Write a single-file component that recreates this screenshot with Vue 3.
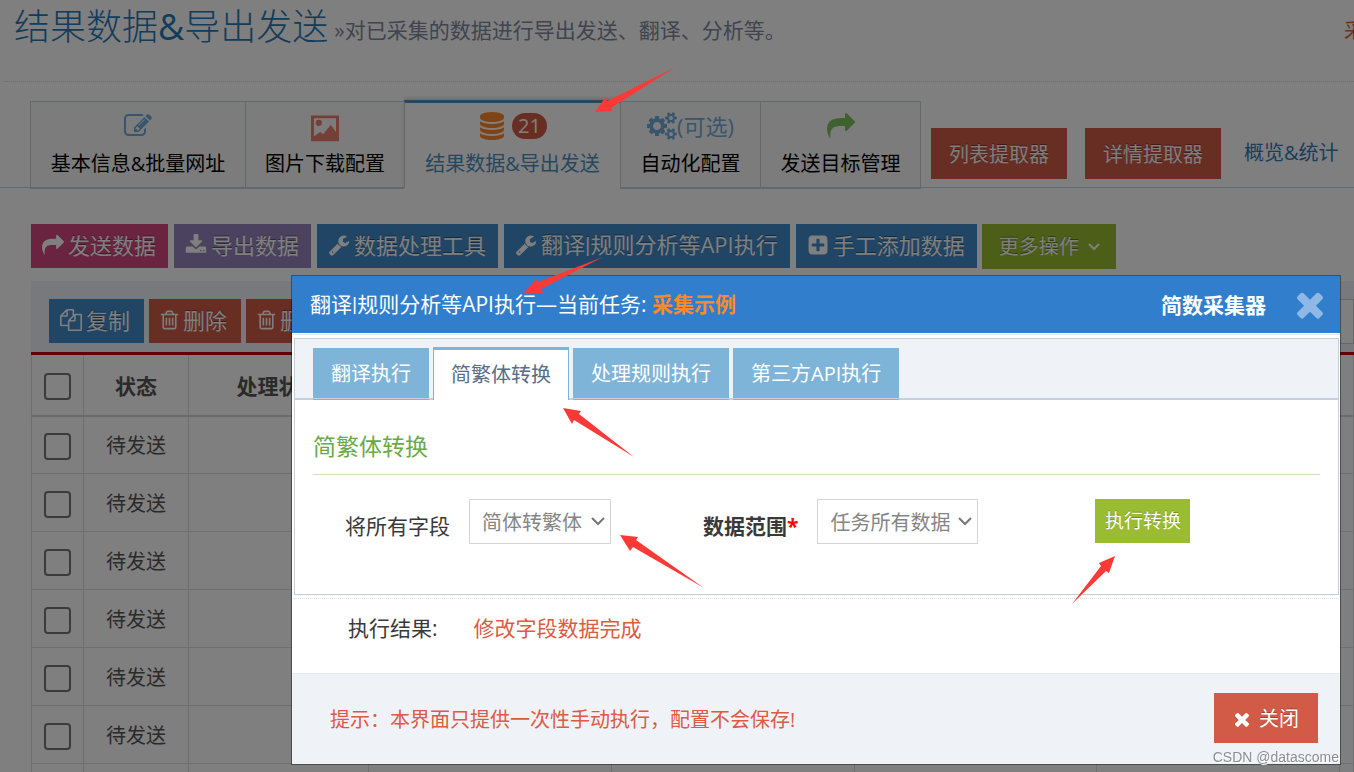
<script setup>
import { ref } from 'vue'

const icons = {
  share: 'M1792 640q0 26-19 45l-512 512q-19 19-45 19t-45-19-19-45v-256h-224q-98 0-175.5 6t-154 21.5-133 42.5-105.5 69.5-80 101-48.5 138.5-17.5 181q0 55 5 123 0 6 2.5 23.5t2.5 26.5q0 15-8.5 25t-23.5 10q-16 0-28-17-7-9-13-22t-13.5-30-10.5-24q-127-285-127-451 0-199 53-333 162-403 875-403h224v-256q0-26 19-45t45-19 45 19l512 512q19 19 19 45z',
  download: 'M1344 1344q0-26-19-45t-45-19-45 19-19 45 19 45 45 19 45-19 19-45zm256 0q0-26-19-45t-45-19-45 19-19 45 19 45 45 19 45-19 19-45zm128-224v320q0 40-28 68t-68 28h-1472q-40 0-68-28t-28-68v-320q0-40 28-68t68-28h465l135 136q58 56 136 56t136-56l136-136h464q40 0 68 28t28 68zm-325-569q17 41-14 70l-448 448q-18 19-45 19t-45-19l-448-448q-31-29-14-70 17-39 59-39h256v-448q0-26 19-45t45-19h256q26 0 45 19t19 45v448h256q42 0 59 39z',
  wrench: 'M448 1472q0-26-19-45t-45-19-45 19-19 45 19 45 45 19 45-19 19-45zm644-420l-682 682q-37 37-90 37-52 0-91-37l-106-108q-38-36-38-90 0-53 38-91l681-681q39 98 114.5 173.5t173.5 114.5zm634-435q0 39-23 106-47 134-164.5 217.5t-258.5 83.5q-185 0-316.5-131.5t-131.5-316.5 131.5-316.5 316.5-131.5q58 0 121.5 16.5t107.5 46.5q16 11 16 28t-16 28l-293 169v224l193 107q5-3 79-48.5t135.5-81 70.5-35.5q15 0 23.5 10t8.5 25z',
  plus: 'M1408 960v-128q0-26-19-45t-45-19h-320v-320q0-26-19-45t-45-19h-128q-26 0-45 19t-19 45v320h-320q-26 0-45 19t-19 45v128q0 26 19 45t45 19h320v320q0 26 19 45t45 19h128q26 0 45-19t19-45v-320h320q26 0 45-19t19-45zm256-544v960q0 119-84.5 203.5t-203.5 84.5h-960q-119 0-203.5-84.5t-84.5-203.5v-960q0-119 84.5-203.5t203.5-84.5h960q119 0 203.5 84.5t84.5 203.5z',
  times: 'M1490 1322q0 40-28 68l-136 136q-28 28-68 28t-68-28l-294-294-294 294q-28 28-68 28t-68-28l-136-136q-28-28-28-68t28-68l294-294-294-294q-28-28-28-68t28-68l136-136q28-28 68-28t68 28l294 294 294-294q28-28 68-28t68 28l136 136q28 28 28 68t-28 68l-294 294 294 294q28 28 28 68z',
  database: 'M896 768q237 0 443-43t325-127v170q0 69-103 128t-280 93.5-385 34.5-385-34.5-280-93.5-103-128v-170q119 84 325 127t443 43zm0 768q237 0 443-43t325-127v170q0 69-103 128t-280 93.5-385 34.5-385-34.5-280-93.5-103-128v-170q119 84 325 127t443 43zm0-384q237 0 443-43t325-127v170q0 69-103 128t-280 93.5-385 34.5-385-34.5-280-93.5-103-128v-170q119 84 325 127t443 43zm0-1152q208 0 385 34.5t280 93.5 103 128v128q0 69-103 128t-280 93.5-385 34.5-385-34.5-280-93.5-103-128v-128q0-69 103-128t280-93.5 385-34.5z',
  edit: 'M888 1184l116-116-152-152-116 116v56h96v96h56zm440-720q-16-16-33 1l-350 350q-17 17-1 33t33-1l350-350q17-17 1-33zm80 594v190q0 119-84.5 203.5t-203.5 84.5h-832q-119 0-203.5-84.5t-84.5-203.5v-832q0-119 84.5-203.5t203.5-84.5h832q63 0 117 25 15 7 18 23 3 17-9 29l-49 49q-14 14-32 8-23-6-45-6h-832q-66 0-113 47t-47 113v832q0 66 47 113t113 47h832q66 0 113-47t47-113v-126q0-13 9-22l64-64q15-15 35-7t20 29zm-96-738l288 288-672 672h-288v-288zm444 132l-92 92-288-288 92-92q28-28 68-28t68 28l152 152q28 28 28 68t-28 68z',
  cogs: 'M896 896q0-106-75-181t-181-75-181 75-75 181 75 181 181 75 181-75 75-181zm768 512q0-52-38-90t-90-38-90 38-38 90q0 53 37.5 90.5t90.5 37.5 90.5-37.5 37.5-90.5zm0-1024q0-52-38-90t-90-38-90 38-38 90q0 53 37.5 90.5t90.5 37.5 90.5-37.5 37.5-90.5zm-384 421v185q0 10-7 19.5t-16 10.5l-155 24q-11 35-32 76 34 48 90 115 7 11 7 20 0 12-7 19-23 30-82.5 89.5t-78.5 59.5q-11 0-21-7l-115-90q-37 19-77 31-11 108-23 155-7 24-30 24h-186q-11 0-20-7.5t-10-17.5l-23-153q-34-10-75-31l-118 89q-7 7-20 7-11 0-21-8-144-133-144-160 0-9 7-19 10-14 41-53t47-61q-23-44-35-82l-152-24q-10-1-17-9.5t-7-19.5v-185q0-10 7-19.5t16-10.5l155-24q11-35 32-76-34-48-90-115-7-11-7-20 0-12 7-20 22-30 82-89t79-59q11 0 21 7l115 90q34-18 77-32 11-108 23-154 7-24 30-24h186q11 0 20 7.5t10 17.5l23 153q34 10 75 31l118-89q8-7 20-7 11 0 21 8 144 133 144 160 0 8-7 19-12 16-42 54t-45 60q23 48 34 82l152 23q10 2 17 10.5t7 19.5zm640 533v140q0 16-149 31-12 27-30 52 51 113 51 138 0 4-4 7-122 71-124 71-8 0-46-47t-52-68q-20 2-30 2t-30-2q-14 21-52 68t-46 47q-2 0-124-71-4-3-4-7 0-25 51-138-18-25-30-52-149-15-149-31v-140q0-16 149-31 13-29 30-52-51-113-51-138 0-4 4-7 4-2 35-20t59-34 30-16q8 0 46 46.5t52 67.5q20-2 30-2t30 2q51-71 92-112l6-2q4 0 124 70 4 3 4 7 0 25-51 138 17 23 30 52 149 15 149 31zm0-1024v140q0 16-149 31-12 27-30 52 51 113 51 138 0 4-4 7-122 71-124 71-8 0-46-47t-52-68q-20 2-30 2t-30-2q-14 21-52 68t-46 47q-2 0-124-71-4-3-4-7 0-25 51-138-18-25-30-52-149-15-149-31v-140q0-16 149-31 13-29 30-52-51-113-51-138 0-4 4-7 4-2 35-20t59-34 30-16q8 0 46 46.5t52 67.5q20-2 30-2t30 2q51-71 92-112l6-2q4 0 124 70 4 3 4 7 0 25-51 138 17 23 30 52 149 15 149 31z',
  copy: 'M1696 384q40 0 68 28t28 68v1216q0 40-28 68t-68 28h-960q-40 0-68-28t-28-68v-288h-544q-40 0-68-28t-28-68v-672q0-40 20-88t48-76l408-408q28-28 76-48t88-20h416q40 0 68 28t28 68v328q68-40 128-40h416zm-544 213l-299 299h299v-299zm-640-384l-299 299h299v-299zm196 647l316-316v-416h-384v416q0 40-28 68t-68 28h-416v640h512v-256q0-40 20-88t48-76zm956 804v-1152h-384v416q0 40-28 68t-68 28h-416v640h896z',
  trash: 'M704 736v576q0 14-9 23t-23 9h-64q-14 0-23-9t-9-23v-576q0-14 9-23t23-9h64q14 0 23 9t9 23zm256 0v576q0 14-9 23t-23 9h-64q-14 0-23-9t-9-23v-576q0-14 9-23t23-9h64q14 0 23 9t9 23zm256 0v576q0 14-9 23t-23 9h-64q-14 0-23-9t-9-23v-576q0-14 9-23t23-9h64q14 0 23 9t9 23zm128 724v-948h-896v948q0 22 7 40.5t14.5 27 10.5 8.5h832q3 0 10.5-8.5t14.5-27 7-40.5zm-672-1076h448l-48-117q-7-9-17-11h-317q-10 2-17 11zm928 32v64q0 14-9 23t-23 9h-96v948q0 83-47 143.5t-113 60.5h-832q-66 0-113-58.5t-47-141.5v-952h-96q-14 0-23-9t-9-23v-64q0-14 9-23t23-9h309l70-167q15-37 54-63t79-26h320q40 0 79 26t54 63l70 167h309q14 0 23 9t9 23z',
  picture: 'M0 100h1792v1640h-1792zM190 270v1150l400-270 180 150 500-590 330 440v-880zM700 560a200 200 0 1 1-400 0a200 200 0 1 1 400 0z',
}

const actions = [
  { text: ['发送数据'], icon: 'share', tone: 'pink' },
  { text: ['导出数据'], icon: 'download', tone: 'purple' },
  { text: ['数据处理工具'], icon: 'wrench', tone: 'blue' },
  { text: ['翻译', '规则分析等API执行'], icon: 'wrench', tone: 'blue' },
  { text: ['手工添加数据'], icon: 'plus', tone: 'blue' },
]
const rows = [1, 2, 3, 4, 5, 6, 7]
const modalTabs = ['翻译执行', '简繁体转换', '处理规则执行', '第三方API执行']
const current = ref('简繁体转换')
const direction = ref('简体转繁体')
const range = ref('任务所有数据')
</script>

<template>
  <div class="page">
    <header class="head">
      <h1>结果数据<span class="amp">&amp;</span>导出发送</h1>
      <small>»对已采集的数据进行导出发送、翻译、分析等。</small>
      <a class="more" href="#">采</a>
    </header>

    <nav class="nav">
      <div class="nav-tabs">
        <a href="#"><span class="ico sky"><svg class="i28" viewBox="0 0 1792 1792"><path :d="icons.edit" /></svg></span><span>基本信息&amp;批量网址</span></a>
        <a href="#"><span class="ico coral"><svg class="i28 low" viewBox="0 0 1792 1792"><path fill-rule="evenodd" :d="icons.picture" /></svg></span><span>图片下载配置</span></a>
        <a href="#" class="on"><span class="ico orange"><svg class="i28" viewBox="0 0 1792 1792"><path :d="icons.database" /></svg><b class="badge">21</b></span><span>结果数据&amp;导出发送</span></a>
        <a href="#"><span class="ico sky tight"><svg class="wide" viewBox="0 0 1920 1792"><path :d="icons.cogs" /></svg>(可选)</span><span>自动化配置</span></a>
        <a href="#"><span class="ico green"><svg class="i28" viewBox="0 0 1792 1792"><path :d="icons.share" /></svg></span><span>发送目标管理</span></a>
      </div>
      <div class="extract">
        <button type="button">列表提取器</button>
        <button type="button">详情提取器</button>
        <a href="#">概览&amp;统计</a>
      </div>
    </nav>

    <div class="actions">
      <button v-for="a in actions" :key="a.text[0]" type="button" class="btn" :class="a.tone">
        <svg class="i22" viewBox="0 0 1792 1792"><path :d="icons[a.icon]" /></svg>
        <span>{{ a.text[0] }}<template v-if="a.text[1]"><span class="sep">|</span>{{ a.text[1] }}</template></span>
      </button>
      <button type="button" class="btn lime">更多操作
        <svg class="chev" viewBox="0 0 14 10"><path d="M2 2l5 5 5-5" /></svg>
      </button>
    </div>

    <section class="panel">
      <div class="bar">
        <button type="button" class="btn blue"><svg class="i22" viewBox="0 0 1792 1792"><path :d="icons.copy" /></svg>复制</button>
        <button type="button" class="btn red"><svg class="slim" viewBox="128 0 1536 1792"><path :d="icons.trash" /></svg>删除</button>
        <button type="button" class="btn red"><svg class="slim" viewBox="128 0 1536 1792"><path :d="icons.trash" /></svg>删</button>
        <input type="text" aria-label="搜索">
      </div>
      <table>
        <colgroup><col class="c1"><col class="c2"><col class="c3"><col><col><col><col><col class="c8"></colgroup>
        <thead>
          <tr><th><input type="checkbox" aria-label="全选"></th><th>状态</th><th>处理状态</th><th></th><th></th><th></th><th></th><th></th></tr>
        </thead>
        <tbody>
          <tr v-for="r in rows" :key="r">
            <td><input type="checkbox" :aria-label="'选择第' + r + '行'"></td><td>待发送</td><td></td><td></td><td></td><td></td><td></td><td></td>
          </tr>
        </tbody>
      </table>
    </section>
  </div>

  <div class="overlay">
    <div class="modal" role="dialog" aria-modal="true">
      <div class="m-head">
        <span class="m-title">翻译<span class="sep">|</span>规则分析等API执行—当前任务: <b>采集示例</b></span>
        <strong>简数采集器</strong>
        <button type="button" class="x" aria-label="关闭窗口"><svg viewBox="302 302 1188 1252"><path :d="icons.times" /></svg></button>
      </div>
      <div class="m-body">
        <div class="box">
          <div class="tabs" role="tablist">
            <button v-for="t in modalTabs" :key="t" type="button" role="tab" :aria-selected="t === current" :class="{ on: t === current }" @click="current = t">{{ t }}</button>
          </div>
          <div class="pane">
            <h2>简繁体转换</h2>
            <div class="form">
              <label for="dir">将所有字段</label>
              <span class="pick"><select id="dir" v-model="direction"><option>简体转繁体</option><option>繁体转简体</option></select><svg class="chev" viewBox="0 0 14 10"><path d="M1 1l6 6 6-6" /></svg></span>
              <label for="range" class="bold">数据范围<i>*</i></label>
              <span class="pick range"><select id="range" v-model="range"><option>任务所有数据</option></select><svg class="chev" viewBox="0 0 14 10"><path d="M1 1l6 6 6-6" /></svg></span>
              <button type="button" class="run">执行转换</button>
            </div>
          </div>
        </div>
        <div class="result"><span>执行结果:</span><output>修改字段数据完成</output></div>
      </div>
      <div class="m-foot">
        <p>提示：本界面只提供一次性手动执行，配置不会保存!</p>
        <button type="button"><svg viewBox="302 302 1188 1252"><path :d="icons.times" /></svg>关闭</button>
      </div>
      <span class="mark">CSDN @datascome</span>
    </div>
  </div>

  <svg class="arrows" width="1354" height="772" viewBox="0 0 1354 772" aria-hidden="true">
    <path d="M595 112l10.500-15 1.500 4 67-33-63 40 2 3z" />
    <path d="M524 293l12-14 2 3 65-25-62 32 2 4z" />
    <path d="M563 408l18 3-2 3 55 43-60-37-2 4z" />
    <path d="M620 535l18 2-2 3 68 48-71-41-3 4z" />
    <path d="M1115 556l-16 7 2 3-29 38 34-33 3 2z" />
  </svg>
</template>

<style>
body { margin: 0; background: #fff; overflow: hidden; }
</style>

<style scoped>
.page, .overlay { font-family: "Open Sans", "Noto Sans CJK SC", sans-serif; font-size: 20px; line-height: 30px; color: #393939; }
.page *, .overlay * { box-sizing: border-box; }
button, input, select { font-family: inherit; font-size: inherit; line-height: inherit; border: 0; border-radius: 0; margin: 0; }
a { text-decoration: none; }
svg { display: block; fill: currentColor; flex: none; }
.sep { font-family: Roboto, sans-serif; }
.page { height: 100vh; overflow: hidden; background: #fff; }

.head { display: flex; align-items: center; height: 82px; margin-left: 3px; padding: 0 0 28px 11px; box-sizing: border-box; border-bottom: 1px dotted #ddd; white-space: nowrap; overflow: hidden; }
h1 { margin: 0; font-size: 36px; line-height: 48px; font-weight: 300; color: #2679b5; }
.amp { font-weight: 400; }
.head small { margin-left: 6px; font-size: 21px; padding-top: 7px; color: #8089a0; flex: 1; }
.more { width: 10px; padding-top: 8px; color: #dd5a43; overflow: hidden; }

.nav { display: flex; margin-top: 18px; height: 88px; border-bottom: 1px solid #c5d0dc; padding-left: 30px; white-space: nowrap; }
.nav-tabs { display: grid; grid-template-columns: 215px 159px 216px 140px 161px; height: 89px; padding-top: 1px; }
.nav-tabs a { display: flex; flex-direction: column; align-items: center; padding-top: 10px; color: #000; background: #f9f9f9; border: 1px solid #c5d0dc; border-right: 0; border-bottom-width: 2px; }
.nav-tabs a:last-child { border-right: 1px solid #c5d0dc; }
.nav-tabs a.on { margin-top: -1px; padding-top: 9px; border-top: 3px solid #4c8fbd; border-bottom-color: #fff; background: #fff; color: #4c8fbd; box-shadow: 0 -2px 3px rgba(0, 0, 0, 0.15); }
.ico { display: flex; align-items: center; gap: 6px; height: 28px; margin-bottom: 9px; font-size: 22px; }
.ico.tight { gap: 0; }
.i28 { width: 28px; height: 28px; }
.low { margin-top: 3px; }
.wide { width: 30px; height: 28px; }
.sky { color: #72aadb; }
.coral { color: #e87f6e; }
.orange { color: #ff892a; }
.green { color: #7fc35d; }
.badge { padding: 0 6px; border-radius: 13px; background: #d15b47; color: #fff; font-size: 20px; font-weight: 400; line-height: 26px; }
.extract { display: flex; align-items: center; padding: 19px 0 0 10px; }
.extract button { height: 51px; width: 136px; padding: 3px 0 0; margin-right: 18px; background: #d15b47; color: #fff; text-shadow: 0 -1px 0 rgba(0, 0, 0, 0.4); }
.extract a { color: #337ab7; margin-left: 5px; }

.actions { display: flex; gap: 6px; margin: 36px 0 0 31px; height: 45px; align-items: flex-start; }
.btn { display: flex; align-items: center; gap: 4px; height: 44px; padding: 0 12px 3px 11px; color: #fff; font-size: 22px; white-space: nowrap; text-shadow: 0 -1px 0 rgba(0, 0, 0, 0.4); }
.i22 { width: 22px; height: 22px; }
.slim { width: 19px; height: 22px; }
.pink { background: #d6487e; }
.purple { background: #9585bf; }
.blue { background: #428bca; }
.red { background: #d15b47; }
.lime { height: 45px; margin-left: -1px; padding: 0 15px 0 17px; gap: 8px; font-size: 20px; background: #9abc32; }
.chev { width: 14px; height: 10px; fill: none; stroke: currentColor; stroke-width: 2; }

.panel { margin: 12px 0 0 31px; background: #eff3f8; }
.bar { display: flex; gap: 5px; padding: 18px 0 8px 18px; }
.bar input { flex: 1; min-width: 0; height: 45px; border: 1px solid #ccc; background: #fff; margin-left: 60px; }
.bar .btn { padding-right: 14px; }
table { width: 100%; table-layout: fixed; border-collapse: collapse; border-top: 3px solid #c00000; background: #fff; font-size: 20px; }
.c1 { width: 52px; }
.c2 { width: 105px; }
.c3 { width: 180px; }
.c8 { width: 14px; }
th, td { height: 58px; padding: 2px 0 0; text-align: center; border: 1px solid #dddfe2; border-top: 0; color: #555; }
th { height: 62px; font-size: 21px; border-bottom: 2px solid #d4d4d4; }
input[type="checkbox"] { appearance: none; display: block; width: 27px; height: 27px; margin: 2px auto 0; border: 2px solid #767676; border-radius: 4px; background: #fff; }

.overlay { position: fixed; inset: 0; background: rgba(0, 0, 0, 0.5); padding: 275px 13px 0 291px; box-sizing: border-box; }
.modal { position: relative; background: #fff; border: 1px solid rgba(0, 0, 0, 0.4); background-clip: padding-box; }
.m-head { display: flex; align-items: center; height: 57px; padding: 0 17px 0 18px; background: #307ecc; color: #fff; font-size: 21px; white-space: nowrap; }
.m-title { flex: 1; }
.m-title b { color: #ff892a; }
.x { margin-left: 31px; padding: 0; background: none; color: #8fb8e5; }
.x svg { width: 26px; height: 28px; }
.m-body { padding: 3px 1px 0 2px; border-top: 1px solid #e5e5e5; margin-top: 1px; }
.box { border: 1px solid #c5d0dc; }
.tabs { display: flex; align-items: flex-end; gap: 4px; height: 61px; padding-left: 18px; background: linear-gradient(#c5d0dc, #c5d0dc) bottom / 100% 2px no-repeat #eff3f8; }
.tabs button { height: 52px; padding: 0 18px; background: linear-gradient(#c5d0dc, #c5d0dc) 0 50px / 100% 1px no-repeat #7db4d8; color: #fff; white-space: nowrap; }
.tabs button.on { height: 53px; padding: 0 17px; background: #fff; border: 1px solid #7db4d8; border-top-width: 3px; border-bottom: 0; color: #576d88; }
.pane { padding: 29px 18px 50px; }
h2 { margin: 0; padding: 0 0 11px; font-size: 23px; line-height: 34px; font-weight: 400; color: #69aa46; border-bottom: 1px solid #cce2c1; }
.form { display: flex; margin-top: 24px; padding-left: 32px; font-size: 21px; white-space: nowrap; }
.form label { padding-top: 12px; margin-right: 19px; }
.form i { color: #f00; font-style: normal; }
.bold { font-weight: 700; margin-left: 92px; }
.pick { position: relative; width: 142px; font-size: 20px; }
.pick.range { width: 161px; }
.pick select { appearance: none; width: 100%; height: 45px; padding: 2px 0 0 12px; border: 1px solid #d5d5d5; background: #fff; color: #858585; }
.pick .chev { position: absolute; right: 6px; top: 18px; color: #777; pointer-events: none; }
.run { height: 44px; width: 95px; margin-left: 117px; padding: 0; background: #9abc32; color: #fff; font-size: 19px; text-shadow: 0 -1px 0 rgba(0, 0, 0, 0.25); }
.result { display: flex; gap: 36px; margin-top: 3px; padding: 14px 0 30px 54px; border-top: 1px dotted #ddd; font-size: 21px; }
.result output { color: #dd5a43; }
.m-foot { display: flex; align-items: center; justify-content: space-between; height: 91px; padding: 0 22px 2px 38px; border-top: 1px solid #e4e9ee; background: #eff3f8; }
.m-foot p { margin: 0; padding-top: 4px; color: #dd5a43; }
.m-foot button { display: flex; align-items: center; gap: 10px; height: 50px; padding: 2px 19px 0 21px; background: #d15b47; color: #fff; text-shadow: 0 -1px 0 rgba(0, 0, 0, 0.25); }
.m-foot svg { width: 14px; height: 15px; }
.mark { position: absolute; right: 1px; bottom: -3px; font-family: "Liberation Sans", sans-serif; font-size: 14px; line-height: 20px; color: #8b8d91; text-shadow: 1px 1px 0 #fff; }
.arrows { position: fixed; left: 0; top: 0; fill: #fb3a38; pointer-events: none; }
</style>
